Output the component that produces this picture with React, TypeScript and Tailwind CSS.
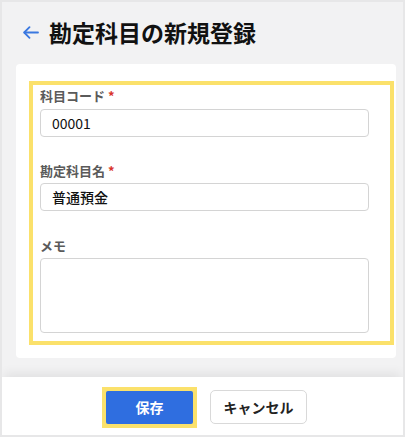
import React from "react";

function Field({ label, required, children, className = "" }: { label: string; required?: boolean; children: React.ReactNode; className?: string }) {
  return (
    <div className={className}>
      <div className="text-[13px] leading-[18px] font-bold text-[#5a5a5a] flex items-center gap-[3px]">
        <span>{label}</span>
        {required && <span className="text-[#d9352b]">*</span>}
      </div>
      {children}
    </div>
  );
}

export default function App() {
  return (
    <div className="w-[405px] h-[437px] border-2 border-[#e7e7e8] bg-[#f2f2f3] flex flex-col font-['Noto_Sans_CJK_JP','Noto_Sans',sans-serif] overflow-hidden">
      <div className="h-[62px] flex items-center pl-[21px] gap-[10px] pb-[2px]">
        <svg width="16" height="13" viewBox="0 0 16 13" fill="none" stroke="#3a78e0" strokeWidth="1.8" strokeLinecap="round" strokeLinejoin="round">
          <path d="M15 6.5H1.5" />
          <path d="M6.5 1.2L1.2 6.5L6.5 11.8" />
        </svg>
        <h1 className="text-[23px] leading-[30px] font-bold text-[#111]">勘定科目の新規登録</h1>
      </div>
      <div className="ml-[14px] mr-[7px] bg-white rounded-[4px] pt-[17px] pl-[13px] pr-[2px] pb-[13px]">
        <div className="border-4 border-[#fbe16b] pt-[2px] pl-[7px] pr-[21px] pb-[8px]">
          <Field label="科目コード" required>
            <div className="mt-[4px] h-[28px] border border-[#d4d4d4] rounded-[4px] flex items-center px-[11px] text-[14px] text-[#111]">
              00001
            </div>
          </Field>
          <Field label="勘定科目名" required className="mt-[25px]">
            <div className="mt-[3px] h-[28px] border border-[#d4d4d4] rounded-[4px] flex items-center px-[11px] text-[14px] font-medium text-[#111]">
              普通預金
            </div>
          </Field>
          <Field label="メモ" className="mt-[26px]">
            <div className="mt-[3px] h-[75px] border border-[#d4d4d4] rounded-[4px]" />
          </Field>
        </div>
      </div>
      <div className="flex-1" />
      <div className="h-[58px] bg-white shadow-[0_-6px_10px_-2px_rgba(0,0,0,0.07)] flex items-center justify-center gap-[13px] pl-[4px] pt-[2px]">
        <div className="p-[4px] bg-[#fbe16b]">
          <button className="w-[87px] h-[33px] bg-[#2f6ee0] rounded-[2px] text-white text-[14px] font-bold">保存</button>
        </div>
        <button className="w-[97px] h-[34px] border border-[#d9d9d9] rounded-[5px] bg-white text-[14px] font-bold text-[#222]">キャンセル</button>
      </div>
    </div>
  );
}
